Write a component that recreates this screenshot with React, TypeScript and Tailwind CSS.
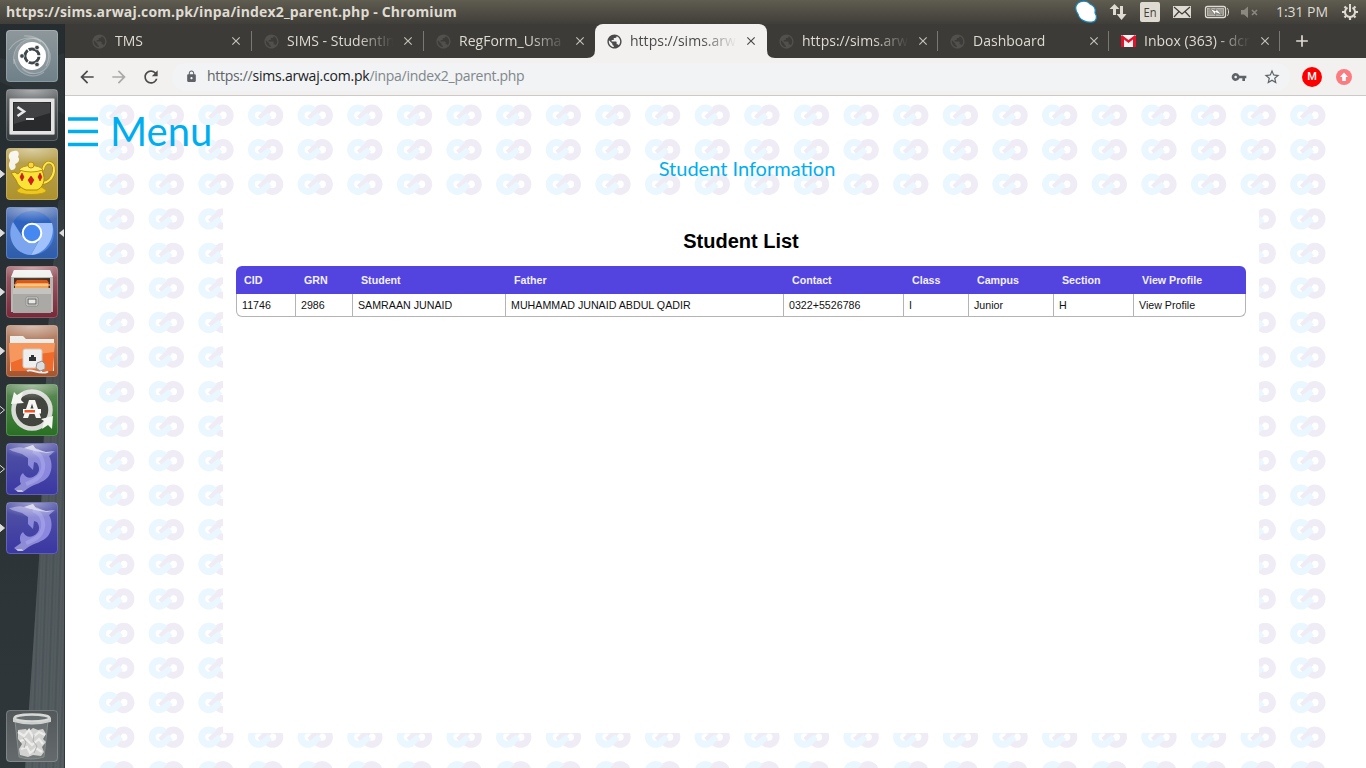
import React from "react";
import { MdArrowBack, MdArrowForward, MdRefresh, MdLock, MdVpnKey, MdStarBorder, MdPublic, MdClose, MdAdd } from "react-icons/md";

const TABS = [
  { title: "TMS", w: "w-[172px]" },
  { title: "SIMS - StudentIn", w: "w-[172px]" },
  { title: "RegForm_Usma", w: "w-[171px]" },
  { title: "https://sims.arw", w: "w-[172px]", active: true },
  { title: "https://sims.arw", w: "w-[171px]" },
  { title: "Dashboard", w: "w-[171px]" },
  { title: "Inbox (363) - dcr", w: "w-[171px]", mail: true },
];

const COLUMNS = [
  { head: "CID", value: "11746", w: "w-[59px]" },
  { head: "GRN", value: "2986", w: "w-[57px]" },
  { head: "Student", value: "SAMRAAN JUNAID", w: "w-[153px]" },
  { head: "Father", value: "MUHAMMAD JUNAID ABDUL QADIR", w: "w-[278px]" },
  { head: "Contact", value: "0322+5526786", w: "w-[120px]" },
  { head: "Class", value: "I", w: "w-[65px]" },
  { head: "Campus", value: "Junior", w: "w-[85px]" },
  { head: "Section", value: "H", w: "w-[80px]" },
  { head: "View Profile", value: "View Profile", w: "w-[113px]" },
];

function SystemBar() {
  return (
    <header className="flex h-6 shrink-0 items-center justify-between bg-linear-to-b from-[#5f5c50] to-[#403e39] pl-1.5 text-[#dfdbd2]">
      <span className="pb-0.5 text-[14px] font-bold whitespace-nowrap tracking-[0.15px]">https://sims.arwaj.com.pk/inpa/index2_parent.php - Chromium</span>
      <div className="flex h-6 items-center">
        <svg width="200" height="24" viewBox="1070 0 200 24">
          <path d="M1078 3C1082 0 1088 1 1090 4C1095 6 1096 9 1095 13C1098 17 1096 22 1092 22C1087 23 1079 20 1078 14C1075 10 1075 6 1078 3Z" fill="#fff" stroke="#1686bd" strokeWidth="1.2" />
          <path d="M1113 18V9H1109.500L1114.500 4L1119.500 9H1116V15H1113ZM1120 6H1123V14H1126.500L1121.500 20L1116.500 14H1120Z" fill="#dfdbd2" />
          <rect x="1140" y="2" width="20" height="20" rx="2" fill="#dfdbd2" />
          <text x="1150" y="17" fontSize="13" textAnchor="middle" fill="#403e39" fontFamily="Open Sans, sans-serif" textLength="13" lengthAdjust="spacingAndGlyphs">En</text>
          <rect x="1173" y="6" width="18" height="12" fill="#dfdbd2" />
          <path d="M1174 7L1182 14L1190 7M1174 17L1179 11.500M1190 17L1185 11.500" stroke="#403e39" strokeWidth="1.200" fill="none" />
          <rect x="1205.500" y="6.500" width="20" height="11" rx="2" fill="none" stroke="#dfdbd2" strokeWidth="1.300" />
          <rect x="1207.500" y="8.500" width="16" height="7" fill="#9b988f" stroke="#c5c2b9" strokeWidth=".8" />
          <path d="M1227 8C1229 9 1229 15 1227 16" stroke="#dfdbd2" fill="none" />
          <path d="M1210 8.500L1216 11L1216 8.500L1222 15L1215.500 12.500L1215.500 15.500Z" fill="#fff" stroke="#45433d" strokeWidth=".5" />
          <path d="M1241 10H1244L1248 6.500V18L1244 14.500H1241Z" fill="#8b887f" />
          <path d="M1252 10L1257 15M1257 10L1252 15" stroke="#8b887f" strokeWidth="1.600" />
        </svg>
        <span className="w-[53px] pb-0.5 pl-1.5 text-[14px] whitespace-nowrap tracking-[-0.05px]">1:31 PM</span>
        <svg className="ml-[18px] mr-[7px]" width="18" height="18" viewBox="-9 -9 18 18" fill="none" stroke="#dfdbd2">
          <path d="M-2.500 -4.300A5 5 0 1 0 2.500 -4.300" strokeWidth="2" />
          <path d="M0 -8V0" strokeWidth="2" />
          <path d="M-5.500 -5.500L-4 -4M5.500 -5.500L4 -4M-8 0H-5M8 0H5M-5.500 5.500L-4 4M5.500 5.500L4 4M0 8V5" strokeWidth="2.200" />
        </svg>
      </div>
    </header>
  );
}

function TileFrame({ children, from, to, glow = true, id }: { children: React.ReactNode; from: string; to: string; glow?: boolean; id: string }) {
  return (
    <svg width="52" height="52" viewBox="0 0 52 52" className="block">
      <defs>
        <linearGradient id={id} x1="0" y1="0" x2="0" y2="1">
          <stop stopColor={from} />
          <stop offset="1" stopColor={to} />
        </linearGradient>
        <radialGradient id={id + "-glow"} cx=".5" cy="0" r=".7">
          <stop stopColor="#fff" stopOpacity=".45" />
          <stop offset="1" stopColor="#fff" stopOpacity="0" />
        </radialGradient>
      </defs>
      <rect width="52" height="52" rx="4" fill={"url(#" + id + ")"} />
      {children}
      {glow && <path d="M1 1H51V13Q26 26 1 19Z" fill={"url(#" + id + "-glow)"} />}
      <rect x=".5" y=".5" width="51" height="51" rx="3.500" fill="none" stroke="#fff" strokeOpacity=".2" />
    </svg>
  );
}

function DashTile() {
  return (
    <TileFrame id="dash" from="#8e989b" to="#6f8089" glow={false}>
      <g fill="none" stroke="#fff" strokeOpacity=".28" strokeWidth="1.200">
        <path d="M8 34C5 15 22 4 34 10C43 15 45 28 40 36" />
        <path d="M18 6C36 5 48 20 43 34C37 46 23 46 16 38" />
        <path d="M3 20C11 7 27 5 35 12M38 42C26 51 10 43 8 29" />
      </g>
      <path d="M8 32C8 12 25 5 36 12C49 22 44 37 35 42C22 48 12 41 8 32Z" fill="#fff" fillOpacity=".13" />
      <circle cx="26" cy="26" r="14" fill="#fff" />
      <circle cx="26" cy="26" r="7" fill="none" stroke="#3f474b" strokeWidth="3" />
      <g stroke="#fff" strokeWidth="1.300"><path d="M26 26L35 26M26 26L21 18M26 26L21 34" /></g>
      <circle cx="26" cy="26" r="5.300" fill="#fff" />
      <circle cx="16" cy="26" r="2.300" fill="#3f474b" stroke="#fff" strokeWidth=".7" />
      <circle cx="31" cy="17.500" r="2.300" fill="#3f474b" stroke="#fff" strokeWidth=".7" />
      <circle cx="31" cy="34.500" r="2.300" fill="#3f474b" stroke="#fff" strokeWidth=".7" />
    </TileFrame>
  );
}

function TerminalTile() {
  return (
    <TileFrame id="term" from="#6a6e70" to="#353b3f">
      <rect x="3.500" y="9.500" width="45" height="36" rx="1" fill="#e2e3e2" stroke="#a4a6a6" />
      <rect x="7" y="13" width="38" height="29" fill="#282a2b" />
      <path d="M8 14H44V24L8 35Z" fill="#fff" fillOpacity=".11" />
      <path d="M11.500 18L18 22.500L11.500 27" fill="none" stroke="#e8e9e8" strokeWidth="2.600" />
      <path d="M20 30H28" stroke="#e8e9e8" strokeWidth="2" />
    </TileFrame>
  );
}

function TeapotTile() {
  return (
    <TileFrame id="teapot" from="#bda85c" to="#ad912b">
      <path d="M5 22C1 17 4 14 4 12C1 7 4 3 8 3C12 2 14 5 12 9C15 12 11 16 9 16C11 20 8 22 5 22Z" fill="#fff" fillOpacity=".88" />
      <path d="M11 42C9 48 42 48 40 42L34 38H17Z" fill="#ecc820" stroke="#c39809" />
      <path d="M37 22C38 12 49 12 48 23C47 30 42 35 36 35" fill="none" stroke="#a9850c" strokeWidth="3.200" />
      <path d="M37 22C38 12 49 12 48 23C47 30 42 35 36 35" fill="none" stroke="#ffe747" strokeWidth="2" />
      <path d="M5 25L9 24C12 27 13 26 15 22H36C41 33 36 40 31 42H20C12 39 11 34 10 32Z" fill="#fae336" stroke="#af860a" />
      <path d="M13 22C16 16 34 16 37 22Q25 26 13 22Z" fill="#ffed64" stroke="#be940d" />
      <circle cx="25" cy="17" r="3" fill="#f8d740" stroke="#b78d0c" />
      <g fill="#d71920" stroke="#96110f" strokeWidth=".5">
        <path d="M16 25L18 29L16 33L14 29ZM25 28L28 32L25 37L22 32ZM34 25L36 29L34 33L32 29Z" />
      </g>
    </TileFrame>
  );
}

function ChromiumTile() {
  return (
    <TileFrame id="chromium" from="#5878ba" to="#2c5cab">
      <circle cx="26" cy="26" r="22" fill="#4c83e0" />
      <path d="M26 16H46A22 22 0 0 0 7 15L17 30Z" fill="#2e63c0" />
      <path d="M26 16H46C50 30 40 47 25 48L35 30Z" fill="#a0c1fa" />
      <path d="M7 15L17 31C20 37 28 37 32 35L25 48C8 47 0 30 7 15Z" fill="#7ba5ee" />
      <circle cx="26" cy="26" r="9.300" fill="#4688f1" stroke="#fff" strokeWidth="2" />
    </TileFrame>
  );
}

function FilesTile() {
  return (
    <TileFrame id="files" from="#a1656d" to="#762838">
      <path d="M8 4H44L47 12V46H5V12Z" fill="#b7b8b4" />
      <path d="M8 4H44L47 11H5Z" fill="#f0f0ed" />
      <rect x="8" y="12" width="36" height="11" fill="#482f22" />
      <path d="M9 17L11 14H41L43 17V23H9Z" fill="#d8591a" />
      <path d="M9 20L11 17H42V23H9Z" fill="#f2a453" />
      <path d="M8 19H44" stroke="#ffe2b7" />
      <path d="M7 22H45V47H7Z" fill="#aaa9a5" />
      <path d="M7 22H45V28H7Z" fill="#c4c3c0" />
      <rect x="20" y="31" width="12" height="9" rx="1.500" fill="#dededb" stroke="#8a8a87" />
      <rect x="22" y="33" width="8" height="5" fill="#e8e8e5" stroke="#555" />
    </TileFrame>
  );
}

function NetworkTile() {
  return (
    <TileFrame id="network" from="#b98d75" to="#a5542d">
      <path d="M4 11H17L20 14H48V46H4Z" fill="#eeece9" />
      <path d="M3 18H49L47 46H5Z" fill="#ee6b2b" />
      <path d="M3 18H49L48 27Q25 29 4 38Z" fill="#f6985d" />
      <rect x="17" y="24" width="19" height="19" rx="2" fill="#eee" stroke="#d1c8c0" />
      <path d="M23 36V32H25V30H28V32H30V36Z" fill="#343333" />
      <path d="M35 43C32 51 44 46 41 47C33 50 25 43 21 46" fill="none" stroke="#eee" strokeWidth="1.800" />
      <path d="M31 38L36 36L39 39V44L34 46L30 43Z" fill="#ddd" stroke="#8f8f8f" />
    </TileFrame>
  );
}

function UpdaterTile() {
  return (
    <TileFrame id="updater" from="#638d5b" to="#276f22">
      <circle cx="26" cy="26" r="17" fill="#42463f" />
      <circle cx="26" cy="26" r="18.500" fill="none" stroke="#d9dbd6" strokeWidth="4.500" />
      <path d="M5 20L8 8L11 11L17 8L15 16L18 19ZM47 32L46 45L42 41L36 45L38 37L35 35Z" fill="#f4f4f1" />
      <path d="M17 34L23 16H29L35 34H30L28.500 30H23.500L22 34Z" fill="#f6f6f3" />
      <path d="M26 19.500L24.500 24.500H27.500Z" fill="#42463f" />
      <rect x="17" y="25" width="18" height="4.500" fill="#fff" />
      <rect x="18.500" y="26" width="10.500" height="2.500" fill="#ef5724" />
    </TileFrame>
  );
}

function DolphinTile({ id }: { id: string }) {
  return (
    <TileFrame id={id} from="#5355a6" to="#3a37a2">
      <defs>
        <linearGradient id={id + "-body"} x1="0" y1="0" x2="0" y2="1">
          <stop stopColor="#8f8fd0" />
          <stop offset=".6" stopColor="#8a87df" />
          <stop offset="1" stopColor="#8f8ed0" />
        </linearGradient>
      </defs>
      <path d="M3 6C8 6 12 3 18 5L27 2L29 5C34 6 36 9 40 9L49 8L43 13C47 20 46 29 42 34C37 40 28 41 21 46L17 49L12 49L8 46L15 41C13 37 14 32 17 30C19 34 23 36 27 34C33 31 35 26 31 20L28 19L27 27L22 22L22 15L16 11L6 8Z" fill={"url(#" + id + "-body)"} />
      <path d="M27 8C38 12 39 24 35 31C32 37 25 39 20 41" fill="none" stroke="#aaa8ee" strokeOpacity=".6" strokeWidth="4" />
      <path d="M18 5L27 2L30 6L40 9L48 8.500L41 10Q30 9 18 5Z" fill="#dcdcec" fillOpacity=".75" />
      <path d="M10 47L16 47L17 49L12 49Z" fill="#c4c4d8" />
    </TileFrame>
  );
}

function TrashTile() {
  return (
    <TileFrame id="trash" from="#53595b" to="#656b6c" glow={false}>
      <path d="M9 11L13 47Q25 51 38 47L42 11" fill="#8b9192" fillOpacity=".4" stroke="#878c8d" />
      <path d="M12 20L20 19L22 22L27 18L32 20L37 19L40 24L37 29L40 32L36 37L38 42L35 46L27 45L22 47L14 45L13 39L16 34L12 29Z" fill="#d2d3d1" />
      <path d="M12 22L18 26L23 20L27 27L33 22L39 25M14 31L20 29L26 35L33 29L37 34M15 39L21 37L24 43L30 38L36 42" fill="none" stroke="#ececea" strokeWidth="2.200" />
      <path d="M17 28L20 32L18 38M28 25L27 31L31 36L28 43" fill="none" stroke="#aeb0ae" />
      <ellipse cx="26" cy="8" rx="17.500" ry="3.500" fill="#676e70" stroke="#d8dad8" strokeWidth="2.500" />
      <path d="M8 8V11Q26 16 44 11V8" fill="none" stroke="#cfd1cf" strokeWidth="2" />
    </TileFrame>
  );
}

function Marker({ side = "left", hollow = false }: { side?: "left" | "right"; hollow?: boolean }) {
  return side === "left" ? (
    <svg className="w-1.5 shrink-0" height="10" viewBox="0 0 6 10"><path d="M-1 .5L4.500 5L-1 9.500Z" fill={hollow ? "none" : "#ddd"} stroke="#ddd" /></svg>
  ) : (
    <svg className="ml-px w-[5px] shrink-0" height="10" viewBox="0 0 5 10"><path d="M5 1L0 5L5 9Z" fill="#ddd" /></svg>
  );
}

function Launcher() {
  const items = [
    { tile: <DashTile />, mark: "none" },
    { tile: <TerminalTile />, mark: "none" },
    { tile: <TeapotTile />, mark: "full" },
    { tile: <ChromiumTile />, mark: "both" },
    { tile: <FilesTile />, mark: "full" },
    { tile: <NetworkTile />, mark: "full" },
    { tile: <UpdaterTile />, mark: "hollow" },
    { tile: <DolphinTile id="dolphin-a" />, mark: "hollow" },
    { tile: <DolphinTile id="dolphin-b" />, mark: "full" },
  ];
  return (
    <aside className="relative flex w-[65px] shrink-0 flex-col overflow-hidden bg-linear-to-b from-[#262d30] to-[#2f373b]">
      <svg className="absolute inset-0" width="65" height="744" viewBox="0 24 65 744">
        <defs>
          <pattern id="grain" width="7" height="300" patternUnits="userSpaceOnUse" patternTransform="rotate(2)">
            <rect width="7" height="300" fill="#555e62" /><path d="M1 0V300M5 0V300" stroke="#697276" strokeOpacity=".5" /><path d="M3 0V300" stroke="#4a5458" />
          </pattern>
          <linearGradient id="grainfade" x1="0" y1="0" x2="0" y2="1"><stop stopColor="#30383c" stopOpacity=".95" /><stop offset=".4" stopColor="#30383c" stopOpacity=".3" /><stop offset="1" stopColor="#30383c" stopOpacity=".1" /></linearGradient>
        </defs>
        <path d="M59 200L48 330L39 560L25 768H65V200Z" fill="url(#grain)" />
        <path d="M59 200L48 330L39 560L25 768H65V200Z" fill="url(#grainfade)" />
        <path d="M0 58Q27 66 65 53V115Q28 93 0 82Z" fill="#424c50" fillOpacity=".25" />
        <path d="M64.500 24V768" stroke="#242a2d" strokeOpacity=".7" />
      </svg>
      <div className="relative flex h-full flex-col gap-[7px] pt-1.5">
        {items.map((it, i) => (
          <div key={i} className="flex h-[52px] items-center">
            {it.mark === "none" ? <span className="w-1.5" /> : <Marker hollow={it.mark === "hollow"} />}
            {it.tile}
            {it.mark === "both" && <Marker side="right" />}
          </div>
        ))}
        <div className="mt-auto mb-1.5 ml-1.5"><TrashTile /></div>
      </div>
    </aside>
  );
}

function GmailIcon() {
  return (
    <svg width="15" height="12" viewBox="0 0 15 12"><rect width="15" height="12" fill="#f4f2f0" /><path d="M0 12V1L1 0L7.500 5L14 0L15 1V12H12V4.500L7.500 8L3 4.500V12Z" fill="#e2132d" /></svg>
  );
}

function TabStrip() {
  return (
    <div className="flex h-[34px] bg-[#3c3b37] pl-[15px] text-[#dfdbd2]">
      {TABS.map((t, i) => (
        <div
          key={i}
          className={`relative flex shrink-0 items-center ${t.w} ${t.active ? "rounded-t-lg bg-[#f2f1f0] text-[#4a4a4a]" : ""}`}
        >
          <span className={`ml-[11px] flex w-4 shrink-0 justify-center ${t.active ? "text-[#4a4a4a]" : "text-[#51504d]"}`}>
            {t.mail ? <GmailIcon /> : <MdPublic size={17} className="shrink-0" />}
          </span>
          <span className="ml-2 w-[109px] overflow-hidden pb-0.5 text-[14px] whitespace-nowrap tracking-[0.02px] mask-r-from-65% mask-r-to-98%">{t.title}</span>
          <MdClose size={14} className={`ml-[5px] shrink-0 ${t.active ? "text-[#4a4a4a]" : "text-[#c5c2b9]"}`} />
          {!t.active && i !== 2 && <span className="absolute top-[7px] right-0 h-5 w-px bg-[#7a7872]" />}
          {t.active && (
            <>
              <svg className="absolute bottom-0 -left-2" width="8" height="8" viewBox="0 0 8 8"><path d="M0 8Q8 8 8 0V8Z" fill="#f2f1f0" /></svg>
              <svg className="absolute -right-2 bottom-0" width="8" height="8" viewBox="0 0 8 8"><path d="M8 8Q0 8 0 0V8Z" fill="#f2f1f0" /></svg>
            </>
          )}
        </div>
      ))}
      <div className="flex items-center pl-3"><MdAdd size={20} /></div>
    </div>
  );
}

function Toolbar() {
  return (
    <div className="flex h-[38px] items-center border-b border-[#cbcac9] bg-[#f2f1f0]">
      <div className="flex gap-3 pl-3 text-[#4a4a4a]">
        <MdArrowBack size={20} />
        <MdArrowForward size={20} className="text-[#aaa9a7]" />
        <MdRefresh size={20} />
      </div>
      <div className="ml-[11px] flex h-7 w-[1118px] shrink-0 items-center rounded-full bg-[#f1f3f4] pl-[13px]">
        <MdLock size={13} className="text-[#5f6368]" />
        <span className="ml-[9px] pb-0.5 text-[14px] whitespace-nowrap tracking-[-0.29px] text-[#80868b]">
          <span className="text-[#5f6368]">https://</span><span className="tracking-[-0.21px] text-[#202124]">sims.arwaj.com.pk</span>/inpa/index2_parent.php
        </span>
        <MdVpnKey size={16} className="mr-4 ml-auto text-[#5f6368]" />
        <MdStarBorder size={18} className="mr-[9px] text-[#5f6368]" />
      </div>
      <span className="ml-3 flex h-5 w-5 items-center justify-center rounded-full bg-[#fc0000] pt-px font-[Roboto] text-[11px] font-medium text-white">M</span>
      <svg className="ml-3.5" width="16" height="16" viewBox="0 0 16 16"><circle cx="8" cy="8" r="8" fill="#fb7c80" /><path d="M8 3.500L12 8H9.800V12H6.200V8H4Z" fill="#fff" /></svg>
    </div>
  );
}

function LinkPattern() {
  return (
    <svg className="absolute inset-0" width="1301" height="672" viewBox="65 96 1301 672">
      <defs>
        <g id="link" fill="none" strokeWidth="7">
          <circle cx="24.700" cy="10.700" r="7.200" stroke="#f0ecf6" />
          <circle cx="10.700" cy="10.700" r="7.200" stroke="#eaf7ff" />
          <path d="M12 14L21 5.500" stroke="#f0ecf6" strokeWidth="6.500" />
          <path d="M13 18L22 10.500" stroke="#eaf7ff" strokeWidth="6" />
        </g>
      </defs>
      {Array.from({ length: 20 }, (_, r) =>
        Array.from({ length: 25 }, (_, c) => <use key={r + "-" + c} href="#link" x={99 + c * 49.63} y={104.5 + r * 34.55} />)
      )}
    </svg>
  );
}

function StudentTable() {
  return (
    <div className="mx-[13px] mt-[13px] text-[10.67px] leading-[13px] whitespace-nowrap">
      <div className="flex h-7 items-center overflow-hidden rounded-t-[6px] bg-[#5344e0] pt-px font-bold text-[#f2f0ff]">
        {COLUMNS.map((c, i) => (
          <span key={c.head} className={`${c.w} shrink-0 ${i ? "pl-[9px]" : "pl-2"}`}>{c.head}</span>
        ))}
      </div>
      <div className="flex h-[23px] overflow-hidden rounded-b-[6px] border border-t-0 border-[#b4b4b4] text-[#111]">
        {COLUMNS.map((c, i) => (
          <span key={c.head} className={`flex shrink-0 items-center pt-px pl-[5px] ${i ? c.w + " border-l border-[#b4b4b4]" : "w-[58px]"}`}>{c.value}</span>
        ))}
      </div>
    </div>
  );
}

export default function App() {
  return (
    <div className="flex h-[768px] w-[1366px] flex-col overflow-hidden font-['Open_Sans',sans-serif]">
      <SystemBar />
      <div className="flex min-h-0 flex-1">
        <Launcher />
        <div className="flex w-[1301px] flex-col">
          <TabStrip />
          <Toolbar />
          <main className="relative min-h-0 flex-1 overflow-hidden bg-white">
            <LinkPattern />
            <div className="relative">
              <div className="flex h-[60px] items-center pt-[11px] pl-[3px] font-[Lato] text-[#00aeef]">
                <svg width="30" height="30" viewBox="0 0 30 30" className="shrink-0"><path d="M0 2H30M0 14.500H30M0 27.500H30" stroke="#00aeef" strokeWidth="3.700" /></svg>
                <span className="ml-3 pb-0.5 text-[40px] leading-none">Menu</span>
              </div>
              <h1 className="h-12 pl-[63px] text-center font-[Lato] text-[20px] leading-6 text-[#00aeef]">Student Information</h1>
              <section className="ml-[158px] h-[529px] w-[1036px] bg-white pt-[25px] font-['Liberation_Sans',Arial,sans-serif]">
                <h2 className="text-center text-[20px] leading-6 font-bold text-black">Student List</h2>
                <StudentTable />
              </section>
            </div>
          </main>
        </div>
      </div>
    </div>
  );
}
